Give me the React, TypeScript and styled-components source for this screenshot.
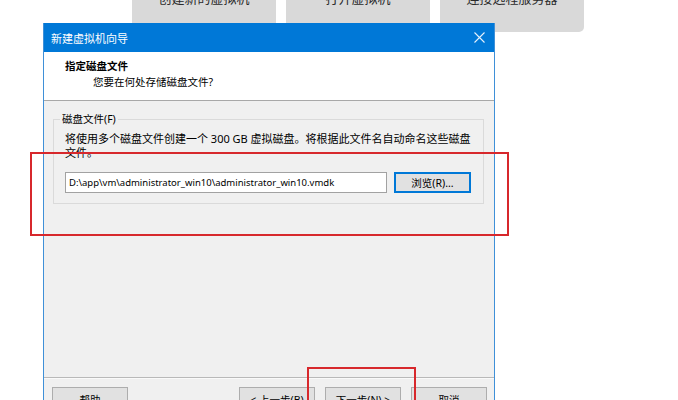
import styled, { createGlobalStyle } from "styled-components";

const GlobalStyle = createGlobalStyle`
  html, body {
    margin: 0;
    padding: 0;
    background: #ffffff;
  }
  body {
    font-family: "Noto Sans", "Noto Sans CJK SC", sans-serif;
  }
`;

const Page = styled.div`
  position: relative;
  width: 678px;
  height: 400px;
  overflow: hidden;
  background: #ffffff;
`;

const TileRow = styled.div`
  display: flex;
  gap: 10px;
  padding-left: 132px;
  margin-top: -28px;
`;

const Tile = styled.div`
  width: 144px;
  height: 60px;
  box-sizing: border-box;
  padding-top: 18px;
  background: #d9d9d9;
  border-radius: 0 0 5px 5px;
  color: #2b2b2b;
  font-size: 13px;
  line-height: 16px;
  text-align: center;
`;

const Dialog = styled.div`
  position: absolute;
  left: 43px;
  top: 23px;
  width: 452px;
  box-sizing: border-box;
  border: 1px solid #3f90d8;
  border-top: none;
  background: #f0f0f0;
  display: flex;
  flex-direction: column;
  font-size: 10.5px;
  color: #000;
`;

const TitleBar = styled.div`
  height: 29px;
  background: #0078d7;
  color: #ffffff;
  display: flex;
  align-items: center;
  justify-content: space-between;
  padding: 0 9px 0 7px;
  font-size: 11px;
`;

const CloseButton = styled.span`
  display: flex;
  align-items: center;
`;

const Header = styled.div`
  height: 49px;
  background: #ffffff;
  border-bottom: 1px solid #a8a8a8;
  box-sizing: border-box;
  padding: 7px 0 0 21px;
  display: flex;
  flex-direction: column;
`;

const HeaderTitle = styled.div`
  font-weight: 700;
  line-height: 15px;
`;

const HeaderSub = styled.div`
  padding-left: 28px;
  line-height: 16px;
`;

const Body = styled.div`
  height: 276px;
  box-sizing: border-box;
  padding: 11px 10px 0 9px;
`;

const GroupBox = styled.fieldset`
  margin: 0;
  border: 1px solid #dadada;
  padding: 0 12px 10px 11px;
`;

const GroupLabel = styled.legend`
  padding: 0 2px;
  margin-left: -5px;
  line-height: 14px;
`;

const Note = styled.p`
  margin: 6px 0 0;
  font-size: 11px;
  line-height: 14px;
`;

const PathRow = styled.div`
  display: flex;
  align-items: center;
  gap: 7px;
  margin-top: 12px;
`;

const PathInput = styled.div`
  width: 322px;
  height: 21px;
  box-sizing: border-box;
  border: 1px solid #a2a2a2;
  background: #ffffff;
  padding-left: 3px;
  display: flex;
  align-items: center;
  font-size: 9.5px;
  white-space: nowrap;
  overflow: hidden;
`;

const Button = styled.div<{ $focused?: boolean }>`
  width: 77px;
  height: 21px;
  box-sizing: border-box;
  border: 1px solid ${(p) => (p.$focused ? "#0078d7" : "#adadad")};
  box-shadow: ${(p) => (p.$focused ? "inset 0 0 0 1px #0078d7" : "none")};
  background: #e1e1e1;
  display: flex;
  align-items: center;
  justify-content: center;
  white-space: nowrap;
`;

const Footer = styled.div`
  border-top: 1px solid #b9b9b9;
  box-shadow: inset 0 1px 0 #fafafa;
  padding: 9px 7px 12px 8px;
  display: flex;
  align-items: flex-start;
`;

const FooterButton = styled(Button)`
  width: 76px;
  height: 23px;
  padding-top: 1px;
`;

const Spacer = styled.div`
  flex: 1;
`;

const NavGroup = styled.div`
  display: flex;
  gap: 10px;
`;

const Marker = styled.div<{ $left: number; $top: number; $w: number; $h: number }>`
  position: absolute;
  left: ${(p) => p.$left}px;
  top: ${(p) => p.$top}px;
  width: ${(p) => p.$w}px;
  height: ${(p) => p.$h}px;
  box-sizing: border-box;
  border: 2px solid #d7282c;
  pointer-events: none;
`;

export default function App() {
  return (
    <Page>
      <GlobalStyle />
      <TileRow>
        <Tile>创建新的虚拟机</Tile>
        <Tile>打开虚拟机</Tile>
        <Tile>连接远程服务器</Tile>
      </TileRow>

      <Dialog>
        <TitleBar>
          <span>新建虚拟机向导</span>
          <CloseButton>
            <svg width="11" height="11" viewBox="0 0 11 11">
              <path d="M0.5 0.5 L10.5 10.5 M10.5 0.5 L0.5 10.5" stroke="#e6f1fb" strokeWidth="1.1" />
            </svg>
          </CloseButton>
        </TitleBar>
        <Header>
          <HeaderTitle>指定磁盘文件</HeaderTitle>
          <HeaderSub>您要在何处存储磁盘文件?</HeaderSub>
        </Header>
        <Body>
          <GroupBox>
            <GroupLabel>磁盘文件(F)</GroupLabel>
            <Note>
              将使用多个磁盘文件创建一个 300 GB 虚拟磁盘。将根据此文件名自动命名这些磁盘
              <br />
              文件。
            </Note>
            <PathRow>
              <PathInput>D:\app\vm\administrator_win10\administrator_win10.vmdk</PathInput>
              <Button $focused>浏览(R)...</Button>
            </PathRow>
          </GroupBox>
        </Body>
        <Footer>
          <FooterButton>帮助</FooterButton>
          <Spacer />
          <NavGroup>
            <FooterButton>&lt; 上一步(B)</FooterButton>
            <FooterButton>下一步(N) &gt;</FooterButton>
            <FooterButton>取消</FooterButton>
          </NavGroup>
        </Footer>
      </Dialog>

      <Marker $left={30} $top={152} $w={479} $h={84} />
      <Marker $left={307} $top={367} $w={109} $h={50} />
    </Page>
  );
}
